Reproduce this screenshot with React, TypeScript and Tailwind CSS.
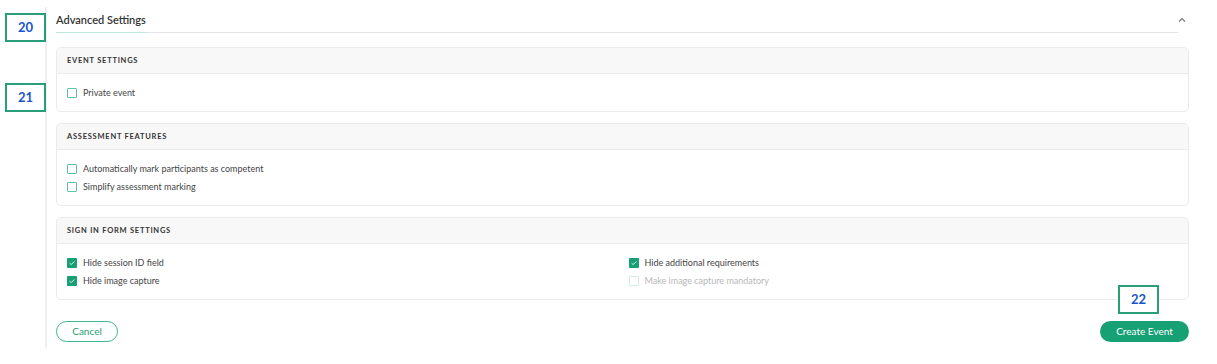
import React from "react";

const font = { fontFamily: "Lato, 'Open Sans', sans-serif" };

function Check({ checked, disabled, label }: { checked?: boolean; disabled?: boolean; label: string }) {
  return (
    <div className="flex items-center h-[18px]">
      {checked ? (
        <span className="w-[10px] h-[10px] bg-[#16a073] rounded-[1px] flex items-center justify-center">
          <svg width="8" height="8" viewBox="0 0 8 8">
            <path d="M1.6 4.2 L3.2 5.6 L6.4 2.4" stroke="#d9f5ea" strokeWidth="1" fill="none" />
          </svg>
        </span>
      ) : (
        <span
          className={
            "w-[10px] h-[10px] rounded-[1px] border-[1.5px] " +
            (disabled ? "border-[#d4eee4]" : "border-[#5fc3a1]")
          }
        />
      )}
      <span className={"ml-[6px] text-[9px] " + (disabled ? "text-[#b8b8b8]" : "text-[#444]")}>{label}</span>
    </div>
  );
}

function Card({ title, children }: { title: string; children: React.ReactNode }) {
  return (
    <div className="border border-[#ebebeb] rounded-[5px] overflow-hidden">
      <div className="h-[26px] bg-[#f8f8f8] border-b border-[#ececec] flex items-center pl-[10px]">
        <span className="text-[7.5px] font-bold tracking-[0.1em] text-[#333]">{title}</span>
      </div>
      <div className="pl-[10px] pt-[10px] pb-[9px]">{children}</div>
    </div>
  );
}

function Annot({ n, className }: { n: string; className: string }) {
  return (
    <div
      className={
        "absolute w-[41px] h-[29px] border-2 border-[#2a9d7b] bg-white flex items-center justify-center text-[13px] font-bold text-[#1a56c8] " +
        className
      }
    >
      {n}
    </div>
  );
}

export default function App() {
  return (
    <div className="relative w-[1217px] h-[364px] bg-white" style={font}>
      <div className="ml-[45px] pt-[7px]">
        <div className="h-[341px] border-l-2 border-[#efefef] pl-[9px] pr-[28px]">
          <div className="flex items-end h-[26px]">
            <div className="flex-1 border-b border-[#e4e4ea] h-[26px] flex items-end relative">
              <div className="border-b border-[#bfe6d8] pb-[2px] -mb-px">
                <span className="text-[11px] font-semibold text-[#333]">Advanced Settings</span>
              </div>
            </div>
            <div className="w-[11px] h-[26px] flex items-start pt-[10px] justify-start">
              <svg width="8" height="6" viewBox="0 0 8 6">
                <path d="M1 4.5 L4 1.5 L7 4.5" stroke="#777" strokeWidth="1.2" fill="none" />
              </svg>
            </div>
          </div>
          <div className="mt-[14px] flex flex-col gap-[11px]">
            <Card title="EVENT SETTINGS">
              <Check label="Private event" />
            </Card>
            <Card title="ASSESSMENT FEATURES">
              <Check label="Automatically mark participants as competent" />
              <Check label="Simplify assessment marking" />
            </Card>
            <Card title="SIGN IN FORM SETTINGS">
              <div className="grid grid-cols-2">
                <div>
                  <Check checked label="Hide session ID field" />
                  <Check checked label="Hide image capture" />
                </div>
                <div className="pl-[1px]">
                  <Check checked label="Hide additional requirements" />
                  <Check disabled label="Make image capture mandatory" />
                </div>
              </div>
            </Card>
          </div>
          <div className="mt-[21px] flex justify-between items-center">
            <button className="w-[62px] h-[21px] rounded-full border border-[#3bb58a] text-[#1f9e72] text-[10px]">
              Cancel
            </button>
            <button className="w-[89px] h-[21px] rounded-full bg-[#16a073] text-white text-[10px]">
              Create Event
            </button>
          </div>
        </div>
      </div>
      <Annot n="20" className="left-[5px] top-[13px]" />
      <Annot n="21" className="left-[5px] top-[83px]" />
      <Annot n="22" className="left-[1118px] top-[285px]" />
    </div>
  );
}
